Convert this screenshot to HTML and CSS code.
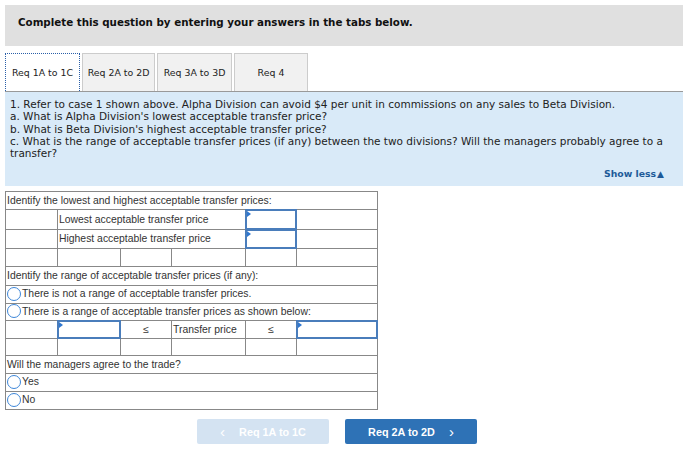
FILE: index.html
```html
<!DOCTYPE html>
<html>
<head>
<meta charset="utf-8">
<link rel="stylesheet" href="styles.css">
</head>
<body>
<div class="page">
  <div class="header">Complete this question by entering your answers in the tabs below.</div>
  <div class="tabs">
    <div class="tab active">Req 1A to 1C</div>
    <div class="tab">Req 2A to 2D</div>
    <div class="tab">Req 3A to 3D</div>
    <div class="tab">Req 4</div>
  </div>
  <div class="panel">
    <p>1. Refer to case 1 shown above. Alpha Division can avoid $4 per unit in commissions on any sales to Beta Division.<br>
    a. What is Alpha Division's lowest acceptable transfer price?<br>
    b. What is Beta Division's highest acceptable transfer price?<br>
    c. What is the range of acceptable transfer prices (if any) between the two divisions? Will the managers probably agree to a transfer?</p>
    <div class="showless">Show less<span class="tri">&#9650;</span></div>
  </div>
  <table class="grid">
    <colgroup>
      <col class="c1"><col class="c2"><col class="c3"><col class="c4"><col class="c5"><col class="c6">
    </colgroup>
    <tr class="h18"><td colspan="6">Identify the lowest and highest acceptable transfer prices:</td></tr>
    <tr class="h20"><td></td><td colspan="3">Lowest acceptable transfer price</td><td class="inp"><span class="box"></span><span class="mark"></span></td><td></td></tr>
    <tr class="h19"><td></td><td colspan="3">Highest acceptable transfer price</td><td class="inp"><span class="box"></span><span class="mark"></span></td><td></td></tr>
    <tr class="h18"><td></td><td></td><td></td><td></td><td></td><td></td></tr>
    <tr class="h19"><td colspan="6">Identify the range of acceptable transfer prices (if any):</td></tr>
    <tr class="h18"><td colspan="6" class="radio"><span class="circ"></span>There is not a range of acceptable transfer prices.</td></tr>
    <tr class="h17"><td colspan="6" class="radio"><span class="circ"></span>There is a range of acceptable transfer prices as shown below:</td></tr>
    <tr class="h18"><td></td><td class="inp"><span class="box"></span><span class="mark"></span></td><td class="ctr">&le;</td><td>Transfer price</td><td class="ctr">&le;</td><td class="inp"><span class="box"></span><span class="mark"></span></td></tr>
    <tr class="h17"><td></td><td></td><td></td><td></td><td></td><td></td></tr>
    <tr class="h18"><td colspan="6">Will the managers agree to the trade?</td></tr>
    <tr class="h18"><td colspan="6" class="radio"><span class="circ"></span>Yes</td></tr>
    <tr class="h18"><td colspan="6" class="radio"><span class="circ"></span>No</td></tr>
  </table>
  <div class="nav">
    <div class="btn prev"><span class="chev">&lsaquo;</span>Req 1A to 1C</div>
    <div class="btn next">Req 2A to 2D<span class="chev r">&rsaquo;</span></div>
  </div>
</div>
</body>
</html>
```
FILE: styles.css
```css
html, body { margin: 0; padding: 0; background: #fff; }
body { font-family: "DejaVu Sans", Verdana, sans-serif; color: #222; }
.page { width: 678px; padding: 5px 0 0 5px; }
.header {
  height: 41px; box-sizing: border-box; background: #e0e0e0;
  padding: 11px 0 0 13px; font-weight: bold; font-size: 10.3px; color: #111;
}
.tabs {
  display: flex; gap: 2px; margin-top: 7px; height: 38px;
  border-bottom: 1px solid #999;
}
.tab {
  box-sizing: border-box; height: 38px; background: #f1f1f1;
  border: 1px solid #ccc; border-bottom: none;
  display: flex; align-items: center; justify-content: center;
  font-size: 9.4px; color: #222;
}
.tab:nth-child(1) { width: 75px; }
.tab:nth-child(2) { width: 73px; }
.tab:nth-child(3) { width: 75px; }
.tab:nth-child(4) { width: 74px; }
.tab.active { background: #fff; border: 1px dotted #2a5fa8; border-bottom: none; }
.panel {
  background: #d9eaf8; height: 94px; box-sizing: border-box;
  padding: 6px 14px 0 5px; font-size: 10.5px; line-height: 12.3px; color: #222;
}
.panel p { margin: 0; }
.showless {
  text-align: right; margin-top: 9px; margin-right: 5px;
  font-weight: bold; font-size: 9.3px; color: #1d5a98;
}
.tri { font-size: 9px; margin-left: 1px; }
.grid {
  margin-top: 5px; border-collapse: collapse; width: 372px; table-layout: fixed;
  font-family: "Liberation Sans", Arial, sans-serif; font-size: 10.4px; color: #333;
  border: 1px solid #777;
}
.c1 { width: 52px; } .c2 { width: 63px; } .c3 { width: 51px; }
.c4 { width: 74px; } .c5 { width: 51px; } .c6 { width: 81px; }
.grid td {
  border: 1px solid #888; padding: 0 1px; white-space: nowrap; position: relative;
  vertical-align: middle; line-height: 12px;
}
.h17 td { height: 16px; } .h18 td { height: 17px; } .h19 td { height: 18px; } .h20 td { height: 19px; }
.grid td.ctr { text-align: center; }
.box {
  position: absolute; left: -1px; top: -1px; right: -1px; bottom: -1px;
  border: 2px solid #4a7dbb;
}
.mark {
  position: absolute; left: 1px; top: 1px; width: 0; height: 0;
  border-left: 4px solid #2f77d0; border-top: 3px solid transparent; border-bottom: 3px solid transparent;
}
.grid td.radio { padding-left: 0; }
.circ {
  display: inline-block; width: 14px; height: 14px; box-sizing: border-box;
  border: 1px solid #3d86d8; border-radius: 50%; vertical-align: middle;
  margin: -2px 1px 0 1px; background: #fff;
}
.nav { display: flex; gap: 16px; margin: 9px 0 0 192px; }
.btn {
  width: 132px; height: 25px; border-radius: 2px; display: flex; align-items: center; justify-content: center;
  font-family: "Liberation Sans", Arial, sans-serif; font-weight: bold; font-size: 10.8px; color: #fff;
}
.prev { background: #d4e3f2; }
.next { background: #2e72b6; }
.chev { font-size: 15px; font-weight: normal; margin-right: 14px; line-height: 1; }
.chev.r { margin-right: 0; margin-left: 14px; }
```
